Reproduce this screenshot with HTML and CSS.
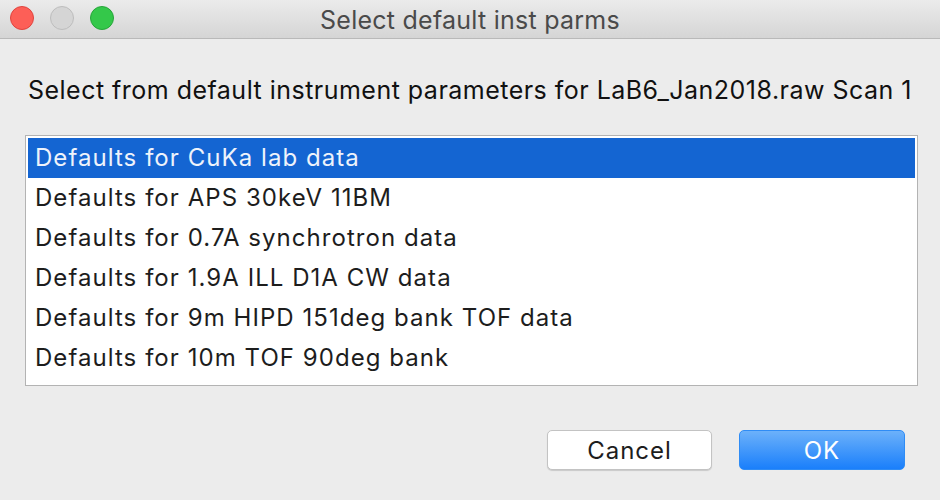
FILE: index.html
```html
<!DOCTYPE html>
<html>
<head>
<meta charset="utf-8">
<link rel="stylesheet" href="styles.css">
</head>
<body>
<div class="window">
  <div class="titlebar">
    <div class="lights">
      <span class="light red"></span>
      <span class="light gray"></span>
      <span class="light green"></span>
    </div>
    <div class="title">Select default inst parms</div>
  </div>
  <div class="content">
    <div class="prompt">Select from default instrument parameters for LaB6_Jan2018.raw Scan 1</div>
    <div class="listbox">
      <div class="row selected">Defaults for CuKa lab data</div>
      <div class="row">Defaults for APS 30keV 11BM</div>
      <div class="row">Defaults for 0.7A synchrotron data</div>
      <div class="row">Defaults for 1.9A ILL D1A CW data</div>
      <div class="row">Defaults for 9m HIPD 151deg bank TOF data</div>
      <div class="row">Defaults for 10m TOF 90deg bank</div>
    </div>
    <div class="buttons">
      <button class="btn cancel">Cancel</button>
      <button class="btn ok">OK</button>
    </div>
  </div>
</div>
</body>
</html>
```

FILE: styles.css
```css
html, body {
  margin: 0;
  padding: 0;
  background: #ececec;
}
body {
  font-family: Inter, "Liberation Sans", sans-serif;
  width: 940px;
  height: 500px;
  overflow: hidden;
}
.window {
  width: 940px;
  height: 500px;
  background: #ececec;
}
.titlebar {
  height: 38px;
  border-bottom: 1px solid #b9b9b9;
  background: linear-gradient(#ebebeb, #d5d5d5);
  position: relative;
  display: flex;
  align-items: center;
  justify-content: center;
}
.lights {
  position: absolute;
  left: 10px;
  top: 6px;
  display: flex;
  gap: 16px;
}
.light {
  width: 24px;
  height: 24px;
  border-radius: 50%;
  box-sizing: border-box;
}
.light.red { background: #fd5f57; border: 1px solid #e0443e; }
.light.gray { background: #d5d5d5; border: 1px solid #bdbdbd; }
.light.green { background: #34c84a; border: 1px solid #27a53a; }
.title {
  font-size: 25px;
  letter-spacing: 0.25px;
  color: #4a4a4a;
  padding-top: 1px;
}
.content {
  padding: 0 22px 0 25px;
}
.prompt {
  font-size: 25px;
  letter-spacing: 0.48px;
  color: #111;
  margin-top: 38px;
  margin-left: 3px;
  height: 26px;
  line-height: 26px;
  white-space: nowrap;
}
.listbox {
  margin-top: 32px;
  height: 251px;
  box-sizing: border-box;
  border: 1px solid #b3b3b3;
  background: #fff;
  padding: 2px 2px 0 2px;
}
.row {
  height: 40px;
  line-height: 40px;
  font-size: 24px;
  letter-spacing: 1.05px;
  color: #1d1d1d;
  padding-left: 7px;
  white-space: nowrap;
}
.row.selected {
  background: #1465d2;
  color: #eef3fb;
}
.buttons {
  display: flex;
  justify-content: flex-end;
  gap: 27px;
  margin-top: 44px;
  padding-right: 13px;
}
.btn {
  font-family: Inter, "Liberation Sans", sans-serif;
  font-size: 24px;
  letter-spacing: 1px;
  height: 40px;
  border-radius: 5px;
  box-sizing: border-box;
  padding: 0;
}
.cancel {
  width: 165px;
  background: #fff;
  border: 1px solid #c3c3c3;
  color: #1d1d1d;
  box-shadow: 0 1px 1px rgba(0,0,0,0.15);
}
.ok {
  width: 166px;
  background: linear-gradient(#6cb1fa, #1a7ffb);
  border: 1px solid #2f8cf5;
  color: #fff;
}
```
